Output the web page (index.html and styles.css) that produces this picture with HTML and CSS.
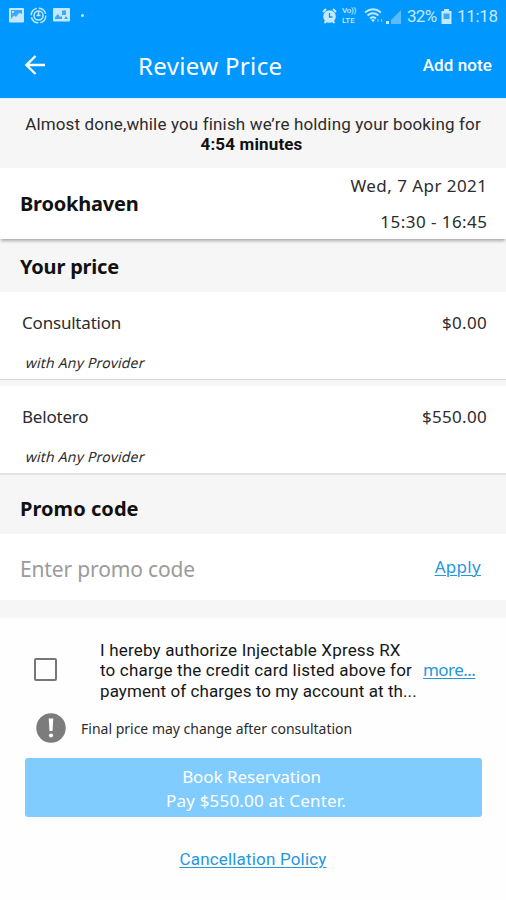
FILE: index.html
```html
<!DOCTYPE html>
<html lang="en">
<head>
<meta charset="utf-8">
<title>Review Price</title>
<link rel="stylesheet" href="styles.css">
</head>
<body>
<header class="top">
  <div class="status">
    <div class="status-left">
      <svg width="15" height="15" viewBox="0 0 15 15"><rect width="15" height="14.5" rx="1" fill="currentColor"/><path d="M2 2h11v4L10 5 7 9 5 7.5 2 11z" fill="#0a96fa" opacity=".75"/><path d="M3 3h2v2H3z" fill="currentColor"/></svg>
      <svg width="17" height="17" viewBox="0 0 17 17" fill="none" stroke="currentColor"><circle cx="8.5" cy="8.5" r="7.3" stroke-width="1.4" stroke-dasharray="9.5 2"/><circle cx="8.5" cy="8.5" r="4.5" stroke-width="1.5"/><path d="M8.500 4v5M6.500 8.500h4" stroke-width="1.500"/></svg>
      <svg width="17" height="14" viewBox="0 0 17 14"><rect width="17" height="13.500" rx="1" fill="currentColor"/><path d="M2 11V9l3-3 2 3 2-1v3zM9 2.500h4V7H9zM11 11l2-3 2 3z" fill="#0a96fa" opacity=".75"/></svg>
      <i class="dot"></i>
    </div>
    <div class="status-right">
      <svg class="alarm" width="15" height="16" viewBox="0 0 15 16"><circle cx="7.500" cy="8.500" r="6.300" fill="currentColor"/><path d="M1 4l3-3M14 4l-3-3M2.500 15l2-2M12.500 15l-2-2" stroke="currentColor" stroke-width="2"/><path d="M7.500 5v4h3" fill="none" stroke="#0a96fa" stroke-width="1.300"/></svg>
      <span class="volte"><span class="vo">Vo))</span><span>LTE</span></span>
      <svg class="wifi" width="20" height="16" viewBox="0 0 20 16" fill="none" stroke="currentColor" stroke-width="1.700"><path d="M1 4.500Q9 -2 17 4.500M3.500 7.500Q9 3 14.500 7.500M6 10.500Q9 8 12 10.500"/><path d="M9 14l-2-2q2-1.500 4 0z" fill="currentColor" stroke="none"/><path d="M14 11v3M17.500 11v3" stroke-width="1.200" opacity=".6"/></svg>
      <svg class="signal" width="15" height="15" viewBox="0 0 15 15"><path d="M0 15v-3h3v3z" fill="currentColor"/><path d="M5 15V11L15 1v14z" fill="currentColor" opacity=".45"/></svg>
      <span class="pct">32%</span>
      <svg class="battery" width="11" height="15" viewBox="0 0 11 15"><path d="M3 0h5v2h2.500v13H.5V2H3z" fill="currentColor"/><path d="M2.500 4.500h6V10h-6z" fill="#0a96fa" opacity=".75"/></svg>
      <span class="time">11:18</span>
    </div>
  </div>
  <div class="bar">
    <svg class="back" width="20" height="20" viewBox="0 0 20 20" fill="none" stroke="#fff" stroke-width="2.300"><path d="M20 10H2M10.500 1L1.500 10l9 9"/></svg>
    <h1 class="title">Review Price</h1>
    <span class="note">Add note</span>
  </div>
</header>
<main>
  <p class="hold"><span>Almost done,while you finish we’re holding your booking for</span><b>4:54 minutes</b></p>
  <section class="place">
    <h2>Brookhaven</h2>
    <div class="when"><span>Wed, 7 Apr 2021</span><span>15:30 - 16:45</span></div>
  </section>
  <h2 class="heading price-heading">Your price</h2>
  <section class="item first">
    <div class="row"><span>Consultation</span><span class="amount">$0.00</span></div>
    <em>with Any Provider</em>
  </section>
  <section class="item second">
    <div class="row"><span>Belotero</span><span class="amount">$550.00</span></div>
    <em>with Any Provider</em>
  </section>
  <h2 class="heading promo-heading">Promo code</h2>
  <section class="promo"><span class="placeholder">Enter promo code</span><a class="apply">Apply</a></section>
  <section class="consent">
    <i class="check"></i>
    <p>I hereby authorize Injectable Xpress RX<br>to charge the credit card listed above for<br><span class="last">payment of charges to my account at th...</span></p>
    <a class="more">more...</a>
  </section>
  <div class="notice">
    <svg width="30" height="30" viewBox="0 0 30 30"><circle cx="15" cy="15" r="14.700" fill="#7c7c7c"/><path d="M12.700 5.500h4.600l-.8 12.500h-3z" fill="#fff"/><circle cx="15" cy="22.500" r="2.100" fill="#fff"/></svg>
    <span>Final price may change after consultation</span>
  </div>
  <button class="book"><span class="action">Book Reservation</span><span class="pay">Pay $550.00 at Center.</span></button>
  <a class="cancel">Cancellation Policy</a>
</main>
</body>
</html>
```
FILE: styles.css
```css
* { box-sizing: border-box; }
body { margin: 0; width: 506px; height: 900px; overflow: hidden; background: #fefefe; color: #2c2c2c; font: 17px/20px "Noto Sans", sans-serif; white-space: nowrap; }
h1, h2, p { margin: 0; }
svg { display: block; flex: none; }
.top { height: 98px; background: #0098ff; color: #fff; }
.status { height: 32px; display: flex; justify-content: space-between; padding: 0 9px; color: #c5e8ff; font: 17px/32px Roboto, sans-serif; }
.status-left, .status-right { display: flex; align-items: center; }
.status-left { gap: 6px; margin-top: -2px; }
.dot { width: 3px; height: 3px; border-radius: 50%; background: currentColor; margin-left: 5px; }
.volte { display: flex; flex-direction: column; font: 500 8px/10px Roboto, sans-serif; margin: 0 6px 0 5px; width: 16px; }
.vo { letter-spacing: -.3px; }
.signal { margin-left: 2px; }
.pct { margin-left: 6px; width: 29px; letter-spacing: -.7px; }
.battery { margin: 0 5px 0 5px; }
.time { width: 40px; letter-spacing: -.3px; }
.bar { height: 66px; padding: 0 14px 0 25px; display: grid; grid-template-columns: 70px 1fr 72px; align-items: center; }
.title { padding: 2px 0 0 43px; font-size: 24px; line-height: 34px; font-weight: 400; letter-spacing: .35px; }
.note { font: 500 17px/20px Roboto, sans-serif; text-align: right; letter-spacing: .1px; }
.hold { height: 70px; padding-top: 15px; background: #f6f6f6; border-top: 1px solid #d9f5ff; font: 17px/20px Roboto, sans-serif; letter-spacing: .15px; display: flex; flex-direction: column; align-items: center; }
.hold b { font-weight: 700; margin-right: 3px; color: #111; }
.place { position: relative; height: 71px; padding: 0 19px 0 20px; background: #fff; display: flex; justify-content: space-between; align-items: center; box-shadow: 0 3px 3px -1px #aaa; }
h2 { font-size: 20px; line-height: 28px; font-weight: 700; color: #111; letter-spacing: -.2px; }
.when { display: flex; flex-direction: column; align-items: flex-end; gap: 16px; padding-top: 1px; letter-spacing: .45px; }
.when span { margin-right: -.45px; }
.heading { background: #f6f6f6; padding-left: 20px; }
.price-heading { height: 53px; padding-top: 14px; }
.promo-heading { height: 59px; padding-top: 20px; letter-spacing: .05px; }
.item { background: #fff; padding: 21px 19px 0 22px; }
.first { height: 94px; border-bottom: 6px solid #f6f6f6; box-shadow: inset 0 -1px #d8d8d8; }
.second { height: 89px; border-bottom: 2px solid #e2e2e2; }
.row { display: flex; justify-content: space-between; letter-spacing: -.2px; }
.amount { letter-spacing: .3px; }
.item em { display: block; width: max-content; margin: 20px 0 0 4px; font-size: 14px; font-style: normal; letter-spacing: .2px; transform: skewX(-14deg); }
.promo { height: 66px; padding: 0 25px 0 20px; background: #fff; display: flex; justify-content: space-between; align-items: center; }
.placeholder { font-size: 21px; line-height: 28px; color: #9b9b9b; padding-top: 3px; letter-spacing: -.15px; }
a { color: #2697df; text-decoration: underline; text-underline-offset: 2px; text-decoration-thickness: 1px; }
.apply { letter-spacing: .3px; }
.consent { height: 110px; border-top: 18px solid #f6f6f6; padding: 22px 0 0 34px; display: flex; }
.check { width: 23px; height: 23px; border: 2px solid #777; border-radius: 2px; margin-top: 18px; }
.consent p { margin-left: 43px; width: 323px; font: 17px/20.3px Roboto, sans-serif; color: #161616; letter-spacing: .18px; }
.last { letter-spacing: .08px; }
.more { margin-top: 20px; letter-spacing: -.55px; }
.notice { height: 48px; padding: 3px 0 0 36px; display: flex; gap: 15px; font-size: 14px; line-height: 32px; }
.book { display: flex; flex-direction: column; align-items: center; justify-content: center; width: 457px; height: 59px; margin-left: 25px; padding: 2px 0 0 5px; border: 0; border-radius: 3px; background: #80ccff; color: #fff; font: 17px/24px "Noto Sans", sans-serif; }
.action { margin-right: 9px; letter-spacing: -.05px; }
.pay { letter-spacing: .2px; }
.cancel { display: block; width: max-content; margin: 32px auto 0; font: 17px/20px Roboto, sans-serif; letter-spacing: .18px; }
```
